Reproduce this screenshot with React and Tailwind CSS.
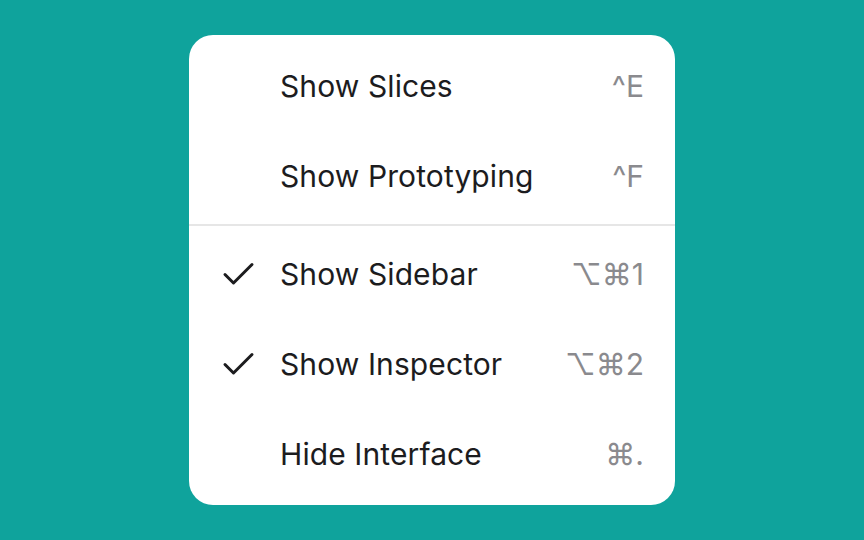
import React from "react";

const items = [
  { label: "Show Slices", shortcut: "^E", checked: false },
  { label: "Show Prototyping", shortcut: "^F", checked: false },
  null,
  { label: "Show Sidebar", shortcut: "⌥⌘1", checked: true },
  { label: "Show Inspector", shortcut: "⌥⌘2", checked: true },
  { label: "Hide Interface", shortcut: "⌘.", checked: false },
];

const Check = () => (
  <svg width="34" height="26" viewBox="0 0 34 26" fill="none">
    <path d="M4 13.5 L12.5 22 L31 3.5" stroke="#1c1c1e" strokeWidth="3" strokeLinecap="round" strokeLinejoin="round" />
  </svg>
);

const App = () => {
  return (
    <div className="w-[864px] h-[540px] bg-[#0fa39c] flex items-center justify-center" style={{ fontFamily: "Inter, 'Noto Sans', sans-serif" }}>
      <div className="w-[486px] bg-white rounded-[24px] pt-[6px] pb-[6px]">
        {items.map((item, i) =>
          item === null ? (
            <div key={i} className="py-[3px]">
              <div className="h-[2px] bg-[#e6e6e6]" />
            </div>
          ) : (
            <div key={i} className="h-[90px] flex items-center pl-[32px] pr-[31px]">
              <div className="w-[59px] flex items-center">{item.checked && <Check />}</div>
              <span className="text-[30px] text-[#1c1c1e] flex-1 tracking-[0.1px]">{item.label}</span>
              <span className="text-[30px] text-[#8a8a8e]">{item.shortcut}</span>
            </div>
          )
        )}
      </div>
    </div>
  );
};

export default App;
